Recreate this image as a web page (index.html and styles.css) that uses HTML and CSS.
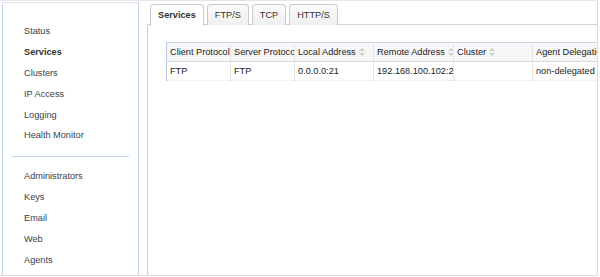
FILE: index.html
```html
<!DOCTYPE html>
<html lang="en">
<head>
    <meta charset="UTF-8">
    <title>Services</title>
    <link rel="stylesheet" href="styles.css">
</head>
<body>
    <div class="frame">
        <div class="sidebar">
            <ul class="nav">
                <li>Status</li>
                <li class="current">Services</li>
                <li>Clusters</li>
                <li>IP Access</li>
                <li>Logging</li>
                <li>Health Monitor</li>
            </ul>
            <div class="nav_sep"></div>
            <ul class="nav nav_second">
                <li>Administrators</li>
                <li>Keys</li>
                <li>Email</li>
                <li>Web</li>
                <li>Agents</li>
            </ul>
        </div>
        <div class="main">
            <ul class="tabs">
                <li class="tab active">Services</li>
                <li class="tab">FTP/S</li>
                <li class="tab">TCP</li>
                <li class="tab">HTTP/S</li>
            </ul>
            <div class="panel">
                <table class="grid">
                    <colgroup>
                        <col class="c1"><col class="c2"><col class="c3"><col class="c4"><col class="c5"><col class="c6">
                    </colgroup>
                    <thead>
                        <tr>
                            <th>Client Protocol</th>
                            <th>Server Protocol</th>
                            <th>Local Address<svg class="sort" width="6" height="8" viewBox="0 0 6 8"><path d="M3 0L6 3H0z M3 8L0 5H6z"/></svg></th>
                            <th>Remote Address<svg class="sort" width="6" height="8" viewBox="0 0 6 8"><path d="M3 0L6 3H0z M3 8L0 5H6z"/></svg></th>
                            <th>Cluster<svg class="sort" width="6" height="8" viewBox="0 0 6 8"><path d="M3 0L6 3H0z M3 8L0 5H6z"/></svg></th>
                            <th>Agent Delegation</th>
                        </tr>
                    </thead>
                    <tbody>
                        <tr>
                            <td>FTP</td>
                            <td>FTP</td>
                            <td>0.0.0.0:21</td>
                            <td>192.168.100.102:21</td>
                            <td></td>
                            <td>non-delegated</td>
                        </tr>
                    </tbody>
                </table>
            </div>
        </div>
    </div>
</body>
</html>
```

FILE: styles.css
```css
body {
    margin: 0;
    background: #fff;
    font-family: "Liberation Sans", Arial, sans-serif;
    font-size: 9.2px;
    color: #222;
}
.frame {
    width: 598px;
    height: 276px;
    box-sizing: border-box;
    border-top: 1px solid #e6e6e6;
    border-right: 1px solid #dcdcdc;
    border-bottom: 1px solid #dcdcdc;
    padding: 1px 0 0 2px;
    display: flex;
    overflow: hidden;
}

/* sidebar */
.sidebar {
    width: 137px;
    box-sizing: border-box;
    border-left: 1px solid #c4d4ee;
    border-top: 1px solid #e0e4ea;
    border-right: 1px solid #c4d4ee;
    padding-top: 18px;
}
.nav {
    list-style: none;
    margin: 0;
    padding: 0 0 0 21px;
}
.nav li {
    line-height: 20.9px;
    height: 20.9px;
    color: #3a3f4c;
}
.nav li.current {
    font-weight: bold;
    color: #333;
}
.nav_sep {
    margin: 9.6px 0 0 9px;
    width: 117px;
    height: 1px;
    background: #c8d8ef;
}
.nav_second {
    margin-top: 9px;
}

/* tabs */
.main {
    flex: 1;
    margin-left: 8px;
    display: flex;
    flex-direction: column;
    min-width: 0;
}
.tabs {
    list-style: none;
    margin: 2px 0 -1px;
    padding: 0 0 0 3px;
    display: flex;
    gap: 3px;
    position: relative;
}
.tab {
    height: 20px;
    line-height: 20px;
    padding: 0 7px;
    border: 1px solid #cacaca;
    border-bottom: none;
    border-radius: 4px 4px 0 0;
    background: linear-gradient(#fbfbfb, #efefef);
    color: #333;
}
.tab.active {
    background: #fff;
    font-weight: bold;
    height: 21px;
    margin-bottom: -1px;
}
.panel {
    flex: 1;
    border-top: 1px solid #d2d2d2;
    border-left: 1px solid #bccfee;
    padding: 17px 0 0 18px;
    overflow: hidden;
}

/* grid */
.grid {
    border-collapse: collapse;
    table-layout: fixed;
    width: 520px;
    border-left: 1px solid #b8cbea;
}
.c1 { width: 64px; }
.c2 { width: 64px; }
.c3 { width: 79px; }
.c4 { width: 80px; }
.c5 { width: 79px; }
.c6 { width: 154px; }
.grid th, .grid td {
    white-space: nowrap;
    overflow: hidden;
    text-align: left;
    padding: 0 3px;
    border-right: 1px solid #e6e6e6;
}
.grid th {
    font-weight: normal;
    color: #222;
    height: 18px;
    background: #f7f7f7;
    border-top: 1px solid #c6d4ea;
    border-bottom: 1px solid #d8d8d8;
}
.grid td {
    height: 18px;
    border-bottom: 1px dotted #e2e2e2;
}
.sort {
    margin-left: 3px;
    fill: #cdcdcd;
    vertical-align: -1px;
}
```
